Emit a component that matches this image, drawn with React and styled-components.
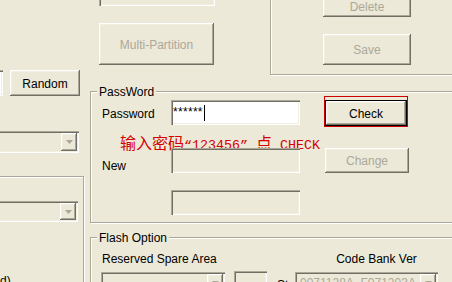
import React from 'react';
import styled, { createGlobalStyle } from 'styled-components';

const Global = createGlobalStyle`
  html, body { margin: 0; padding: 0; background: #ECE9D8; }
  body { font-family: "Liberation Sans", Arial, sans-serif; font-size: 12px; color: #000; }
`;

const FACE = '#ECE9D8';
const sunken = `box-shadow: inset 1px 1px 0 #ACA899, inset 2px 2px 0 #716F64, inset -1px -1px 0 #FFFFFF, inset -2px -2px 0 #F1EFE2;`;
const raised = `box-shadow: inset -1px -1px 0 #716F64, inset 1px 1px 0 #FFFFFF, inset -2px -2px 0 #ACA899, inset 2px 2px 0 #F1EFE2;`;
const raisedDefault = `box-shadow: inset 0 0 0 1px #000000, inset -2px -2px 0 #716F64, inset 2px 2px 0 #FFFFFF, inset -3px -3px 0 #ACA899, inset 3px 3px 0 #F1EFE2;`;

const Window = styled.div`
  width: 452px;
  height: 282px;
  overflow: hidden;
  background: ${FACE};
  display: flex;
  align-items: flex-start;
`;

const LeftCol = styled.div`
  flex: none;
  width: 86px;
  display: flex;
  flex-direction: column;
  align-items: flex-start;
`;

const RightCol = styled.div`
  flex: none;
  width: 420px;
  margin-left: 4px;
  display: flex;
  flex-direction: column;
  align-items: flex-start;
`;

const Button = styled.button`
  box-sizing: border-box;
  flex: none;
  width: ${p => p.$w}px;
  height: ${p => p.$h}px;
  margin: 0;
  padding: 1px 0 0 0;
  border: none;
  border-radius: 0;
  background: ${FACE};
  font: 12px "Liberation Sans", Arial, sans-serif;
  color: ${p => (p.disabled ? '#ACA899' : '#000')};
  ${p => (p.$default ? raisedDefault : raised)}
  display: flex;
  align-items: center;
  justify-content: center;
`;

const Field = styled.div`
  box-sizing: border-box;
  flex: none;
  width: ${p => p.$w}px;
  height: ${p => p.$h}px;
  background: ${p => (p.$enabled ? '#FFFFFF' : FACE)};
  ${sunken}
  padding-left: 3px;
  display: flex;
  align-items: center;
`;

const Stars = styled.span`
  font-size: 12px;
  line-height: 12px;
  margin-top: -2px;
  letter-spacing: 0.3px;
`;

const Caret = styled.span`
  display: inline-block;
  width: 1px;
  height: 16px;
  background: #000;
  margin-left: 1px;
`;

const Combo = styled.div`
  box-sizing: border-box;
  flex: none;
  width: ${p => p.$w}px;
  height: ${p => p.$h}px;
  ${sunken}
  padding: 2px;
  display: flex;
  align-items: stretch;
  justify-content: space-between;
  color: #ACA899;
`;

const ComboText = styled.span`
  align-self: center;
  padding-left: 3px;
  white-space: nowrap;
  line-height: 14px;
`;

const DropButton = styled.div`
  flex: none;
  width: 16px;
  background: ${FACE};
  ${raised}
  display: flex;
  align-items: center;
  justify-content: center;
`;

const DropArrow = () => (
  <svg width="7" height="4" viewBox="0 0 7 4">
    <polygon points="0,0 7,0 3.5,4" fill="#ACA899" />
  </svg>
);

const Group = styled.div`
  position: relative;
  box-sizing: border-box;
  flex: none;
  border: 1px solid #ACA899;
  box-shadow: inset 1px 1px 0 #FFFFFF, 1px 1px 0 #FFFFFF;
`;

const Legend = styled.span`
  position: absolute;
  top: -7px;
  left: 6px;
  padding: 0 2px;
  background: ${FACE};
  line-height: 14px;
  white-space: nowrap;
`;

/* ---------- left column ---------- */
const RandomRow = styled.div`
  display: flex;
  margin-top: 70px;
`;

const EdgeField = styled(Field)`
  margin-left: -37px;
`;

const RandomButton = styled(Button)`
  margin-left: 7px;
`;

const LeftCombo = styled(Combo)`
  margin-top: 35px;
  margin-left: -21px;
`;

const LeftGroup = styled(Group)`
  width: 120px;
  height: 140px;
  margin-top: 23px;
  margin-left: -36px;
  padding: 24px 5px 0 0;
  display: flex;
  flex-direction: column;
  align-items: flex-end;
`;

const TailText = styled.span`
  align-self: flex-start;
  margin-top: 52px;
  margin-left: 35px;
  line-height: 14px;
`;

/* ---------- top of right column ---------- */
const TopRow = styled.div`
  display: flex;
  align-items: flex-start;
`;

const MidStack = styled.div`
  flex: none;
  width: 116px;
  margin-left: 9px;
  display: flex;
  flex-direction: column;
  align-items: flex-start;
`;

const TopField = styled(Field)`
  margin-top: -24px;
`;

const MultiButton = styled(Button)`
  margin-top: 17px;
`;

const UpperGroup = styled(Group)`
  width: 250px;
  margin-left: 55px;
  margin-top: -10px;
  padding: 5px 0 9px 52px;
  display: flex;
  flex-direction: column;
  gap: 17px;
`;

/* ---------- password group ---------- */
const PasswordGroup = styled(Group)`
  width: 420px;
  margin-top: 16px;
  padding: 4px 0 7px 10px;
  display: flex;
  flex-direction: column;
  align-items: flex-start;
`;

const Row = styled.div`
  display: flex;
  align-items: flex-start;
  margin-top: ${p => p.$top || 0}px;
`;

const RowLabel = styled.span`
  flex: none;
  box-sizing: border-box;
  width: 70px;
  padding-left: 1px;
  margin-top: 11px;
  line-height: 14px;
`;

const PasswordField = styled(Field)`
  margin-top: 4px;
  padding-left: 2px;
`;

const FocusFrame = styled.div`
  box-sizing: border-box;
  flex: none;
  height: 31px;
  margin-left: 24px;
  padding-top: 3px;
  border: 1px solid #CC0000;
`;

const ChangeButton = styled(Button)`
  margin-left: 25px;
`;

const IndentField = styled(Field)`
  margin-left: 70px;
`;

const Hint = styled.div`
  margin: 8px 0 0 19px;
  height: 15px;
  line-height: 15px;
  white-space: nowrap;
  color: #D40000;
  font-family: "Liberation Mono", "Noto Sans CJK SC", monospace;
  font-size: 13.33px;
`;

const Cjk = styled.span`
  font-family: "Noto Sans CJK SC", sans-serif;
  font-size: 16px;
  line-height: 15px;
`;

/* ---------- flash option group ---------- */
const FlashGroup = styled(Group)`
  width: 420px;
  height: 100px;
  margin-top: 14px;
  padding: 14px 0 0 10px;
  display: flex;
  flex-direction: column;
  align-items: flex-start;
`;

const Cell = styled.span`
  flex: none;
  box-sizing: border-box;
  width: ${p => p.$w}px;
  padding-left: ${p => p.$pad || 0}px;
  text-align: ${p => p.$align || 'left'};
  line-height: 14px;
  white-space: nowrap;
`;

const SmallBox = styled(Field)`
  margin-left: 9px;
  margin-top: -1px;
`;

const StLabel = styled.span`
  flex: none;
  width: 28px;
  box-sizing: border-box;
  padding-left: 10px;
  margin-top: 6px;
  line-height: 14px;
`;

export default function App() {
  return (
    <>
      <Global />
      <Window>
        <LeftCol>
          <RandomRow>
            <EdgeField $w={40} $h={26} $enabled />
            <RandomButton $w={70} $h={26}>Random</RandomButton>
          </RandomRow>
          <LeftCombo $w={100} $h={22}>
            <ComboText />
            <DropButton><DropArrow /></DropButton>
          </LeftCombo>
          <LeftGroup>
            <Combo $w={100} $h={21}>
              <ComboText />
              <DropButton><DropArrow /></DropButton>
            </Combo>
            <TailText>d)</TailText>
          </LeftGroup>
        </LeftCol>

        <RightCol>
          <TopRow>
            <MidStack>
              <TopField $w={116} $h={30} />
              <MultiButton $w={115} $h={42} disabled>Multi-Partition</MultiButton>
            </MidStack>
            <UpperGroup>
              <Button $w={88} $h={21} disabled>Delete</Button>
              <Button $w={88} $h={31} disabled>Save</Button>
            </UpperGroup>
          </TopRow>

          <PasswordGroup>
            <Legend>PassWord</Legend>
            <Row>
              <RowLabel>Password</RowLabel>
              <PasswordField $w={129} $h={25} $enabled>
                <Stars>******</Stars>
                <Caret />
              </PasswordField>
              <FocusFrame>
                <Button $w={82} $h={26} $default>Check</Button>
              </FocusFrame>
            </Row>
            <Hint>
              <Cjk>输入密码</Cjk>“123456” <Cjk>点</Cjk> CHECK
            </Hint>
            <Row $top={-2}>
              <RowLabel>New</RowLabel>
              <Field $w={129} $h={25} />
              <ChangeButton $w={84} $h={25} disabled>Change</ChangeButton>
            </Row>
            <Row $top={17}>
              <IndentField $w={129} $h={25} />
            </Row>
          </PasswordGroup>

          <FlashGroup>
            <Legend>Flash Option</Legend>
            <Row>
              <Cell $w={133} $pad={1}>Reserved Spare Area</Cell>
              <Cell $w={71} />
              <Cell $w={143} $align="center">Code Bank Ver</Cell>
            </Row>
            <Row $top={6}>
              <Combo $w={124} $h={22}>
                <ComboText />
                <DropButton><DropArrow /></DropButton>
              </Combo>
              <SmallBox $w={33} $h={24} />
              <StLabel>St</StLabel>
              <Combo $w={143} $h={22}>
                <ComboText>0071128A_F071203A</ComboText>
                <DropButton><DropArrow /></DropButton>
              </Combo>
            </Row>
          </FlashGroup>
        </RightCol>
      </Window>
    </>
  );
}
